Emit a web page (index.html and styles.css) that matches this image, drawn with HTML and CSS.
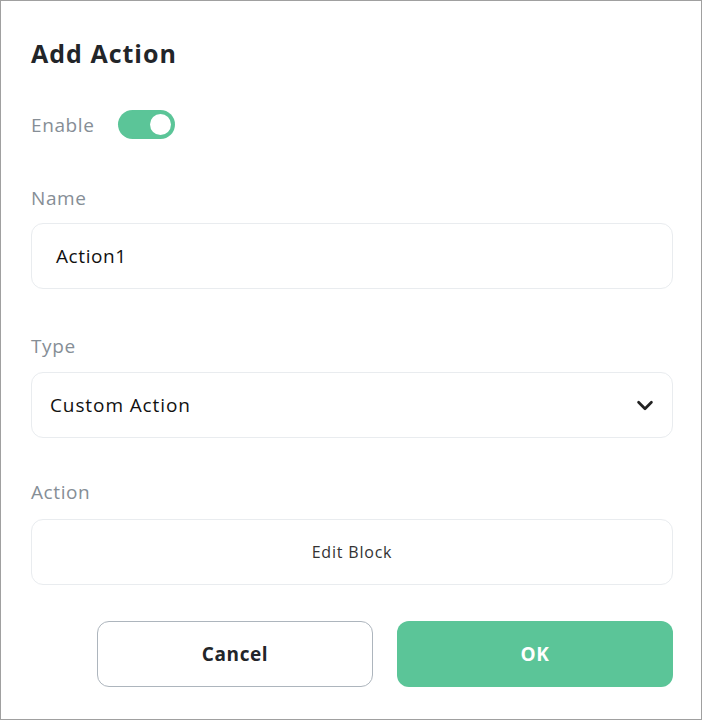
FILE: index.html
```html
<html><head><title>Add Action</title>
<link rel="stylesheet" href="styles.css">
</head>
<body>

<div class="dialog">
  <h2 class="dialog-title">Add Action</h2>

  <div class="enable-row">
    <span class="field-label">Enable</span>
    <div class="toggle on"><div class="toggle-knob"></div></div>
  </div>

  <div class="field field-name">
    <div class="field-label">Name</div>
    <div class="field-box">Action1</div>
  </div>

  <div class="field field-type">
    <div class="field-label">Type</div>
    <div class="field-box select-box">
      <span>Custom Action</span>
      <svg class="chevron" viewBox="0 0 24 24" width="22" height="22">
        <path d="M5 9l7 7 7-7" fill="none" stroke="#222" stroke-width="3" stroke-linecap="round" stroke-linejoin="round"/>
      </svg>
    </div>
  </div>

  <div class="field field-action">
    <div class="field-label">Action</div>
    <div class="field-box block-box">Edit Block</div>
  </div>

  <div class="buttons">
    <button class="btn btn-cancel">Cancel</button>
    <button class="btn btn-ok">OK</button>
  </div>
</div>

</body></html>
```

FILE: styles.css
```css
:root {
  --green: #5bc598;
  --label: #868e96;
  --text: #222529;
  --line: #e9ecef;
}

body {
  margin: 0;
  padding: 0;
  background: #fff;
  font-family: 'Open Sans', 'Noto Sans CJK KR', sans-serif;
  color: var(--text);
  letter-spacing: 0.6px;
}

.dialog {
  width: 702px;
  height: 720px;
  box-sizing: border-box;
  border: 1px solid #a0a0a0;
  padding: 36px 28px 0 30px;
}

.dialog-title {
  margin: 0;
  font-size: 25px;
  line-height: 32px;
  font-weight: 700;
  letter-spacing: 1px;
}

.enable-row {
  display: flex;
  align-items: center;
  gap: 24px;
  margin-top: 41px;
  height: 29px;
}

.field-label {
  color: var(--label);
  font-size: 19px;
  line-height: 24px;
}

.toggle {
  width: 57px;
  height: 29px;
  border-radius: 15px;
  background: var(--green);
  display: flex;
  align-items: center;
  justify-content: flex-end;
  padding: 0 4px;
  box-sizing: border-box;
}

.toggle-knob {
  width: 21px;
  height: 21px;
  border-radius: 50%;
  background: #fff;
}

.field-name { margin-top: 47px; }
.field-type { margin-top: 45px; }
.field-action { margin-top: 42px; }

.field-box {
  margin-top: 13px;
  height: 66px;
  box-sizing: border-box;
  border: 1px solid var(--line);
  border-radius: 12px;
  display: flex;
  align-items: center;
  font-size: 19px;
  color: #111;
  padding: 0 24px;
}

.select-box {
  margin-top: 14px;
  padding: 0 16px 0 18px;
  justify-content: space-between;
  letter-spacing: 0.9px;
}

.block-box {
  margin-top: 15px;
  justify-content: center;
  font-size: 16px;
  color: #333;
  letter-spacing: 0.8px;
}

.buttons {
  display: flex;
  justify-content: flex-end;
  gap: 24px;
  margin-top: 36px;
}

.btn {
  width: 276px;
  height: 66px;
  border-radius: 12px;
  font-family: inherit;
  font-size: 19px;
  font-weight: 700;
  letter-spacing: 0.6px;
  cursor: pointer;
}

.btn-cancel {
  background: #fff;
  border: 1px solid #adb5bd;
  color: var(--text);
}

.btn-ok {
  background: var(--green);
  border: none;
  color: #fff;
}
```
